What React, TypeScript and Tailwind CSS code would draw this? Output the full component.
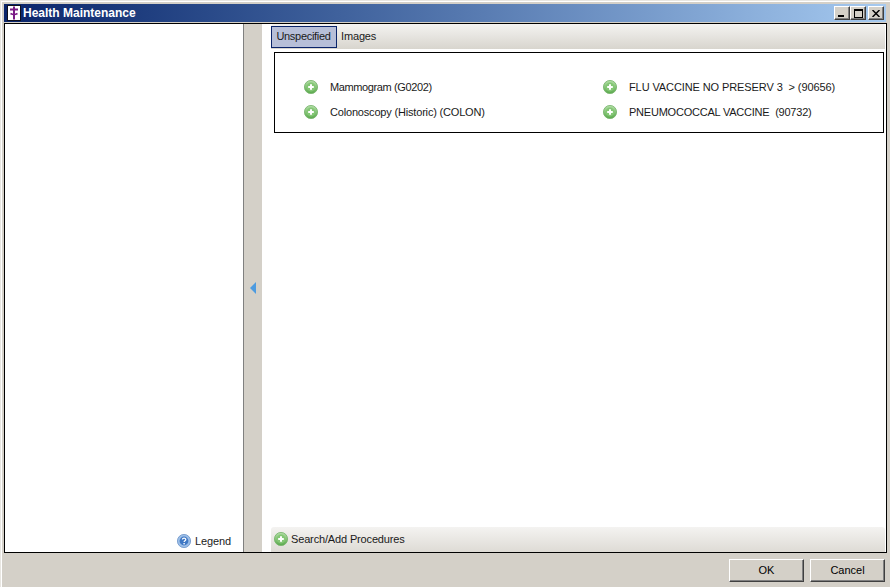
import React from 'react'

const font = { fontFamily: '"Liberation Sans", Arial, sans-serif' }

function PlusIcon({ id, className = '' }: { id: string; className?: string }) {
  return (
    <svg width="14" height="14" viewBox="0 0 14 14" className={`shrink-0 ${className}`}>
      <defs>
        <linearGradient id={id} x1="0" y1="0" x2="0" y2="1">
          <stop offset="0" stopColor="#b4dfa8" />
          <stop offset="1" stopColor="#5aa94c" />
        </linearGradient>
      </defs>
      <circle cx="7" cy="7" r="6.6" fill={`url(#${id})`} stroke="#74b268" strokeWidth="0.8" />
      <circle cx="7" cy="7" r="4.4" fill="#84c775" />
      <path d="M7 4.2v5.6M4.2 7h5.6" stroke="#fff" strokeWidth="2" />
    </svg>
  )
}

function HelpIcon() {
  return (
    <svg width="14" height="14" viewBox="0 0 14 14" className="shrink-0">
      <circle cx="7" cy="7" r="6.6" fill="#9dbfe8" stroke="#6b93c8" strokeWidth="0.8" />
      <circle cx="7" cy="7" r="4.4" fill="#3f78c4" />
      <path d="M5.4 5.6c0-2 3.4-2 3.4 0 0 1.2-1.7 1.2-1.7 2.4" fill="none" stroke="#fff" strokeWidth="1.2" />
      <rect x="6.4" y="9" width="1.4" height="1.4" fill="#fff" />
    </svg>
  )
}

function AppIcon() {
  return (
    <svg width="14" height="16" viewBox="0 0 14 16" className="shrink-0">
      <rect width="14" height="16" fill="#10101c" />
      <rect x="1" y="1" width="12" height="14" fill="#fff" />
      <path d="M7 1.5v13M3 4.5h8" stroke="#7a1b86" strokeWidth="2" />
      <path d="M3.5 8.5c2.4 1.4 4.6 1.4 7 0" stroke="#7a1b86" strokeWidth="1.6" fill="none" />
    </svg>
  )
}

function CaptionButton({ children, className = '' }: { children: React.ReactNode; className?: string }) {
  return (
    <div
      className={`flex h-[14px] w-[16px] items-center justify-center border border-t-white border-l-white border-r-[#404040] border-b-[#404040] bg-[#d4d0c8] shadow-[inset_-1px_-1px_0_#808080] ${className}`}
    >
      {children}
    </div>
  )
}

function ProcedureItem({ id, label, tracking }: { id: string; label: string; tracking: string }) {
  return (
    <div className="flex h-[25px] items-center">
      <PlusIcon id={id} className="mb-[2px]" />
      <span className={`ml-[12px] whitespace-pre text-[11px] text-[#1a1a1a] ${tracking}`}>{label}</span>
    </div>
  )
}

function DialogButton({ label }: { label: string }) {
  return (
    <button className="h-[23px] w-[75px] border border-t-white border-l-white border-r-[#404040] border-b-[#404040] bg-[#d4d0c8] text-[11px] text-black shadow-[inset_-1px_-1px_0_#808080]">
      {label}
    </button>
  )
}

export default function App() {
  return (
    <div
      style={font}
      className="flex h-[587px] w-[890px] flex-col overflow-hidden bg-[#d4d0c8] px-[4px] pt-[4px] text-[12px] shadow-[inset_1px_1px_0_#e8e6e1,inset_2px_2px_0_#ffffff]"
    >
      {/* barra de titulo */}
      <div className="flex h-[18px] shrink-0 items-center bg-gradient-to-r from-[#0a246a] to-[#a6caf0] pl-[3px] pr-[2px]">
        <AppIcon />
        <span className="ml-[2px] text-[12px] font-bold text-white">Health Maintenance</span>
        <div className="ml-auto flex items-center">
          <CaptionButton>
            <div className="mt-[6px] mr-[2px] h-[2px] w-[6px] bg-black" />
          </CaptionButton>
          <CaptionButton className="mr-[2px]">
            <div className="h-[9px] w-[9px] border border-t-2 border-black" />
          </CaptionButton>
          <CaptionButton>
            <svg width="8" height="7" viewBox="0 0 8 7">
              <path d="M0.5 0l7 7M7.5 0l-7 7" stroke="#000" strokeWidth="1.5" />
            </svg>
          </CaptionButton>
        </div>
      </div>

      {/* cuerpo */}
      <div className="mt-[1px] flex h-[530px] w-[883px] shrink-0 border border-black bg-white">
        <div className="flex w-[238px] shrink-0 flex-col justify-end pb-[3px] pr-[12px]">
          <div className="flex items-center justify-end">
            <HelpIcon />
            <span className="ml-[4px] text-[11px] tracking-[-0.1px] text-[#1a1a1a]">Legend</span>
          </div>
        </div>

        <div className="flex w-[19px] shrink-0 items-center justify-center border-l border-[#808080] bg-[#d4d0c8]">
          <svg width="8" height="12" viewBox="0 0 8 12">
            <path d="M7 0v12L1 6z" fill="#4d9be0" />
          </svg>
        </div>

        <div className="flex min-w-0 flex-1 flex-col pl-[9px] pr-[1px]">
          <div className="flex h-[25px] shrink-0 items-center rounded-t-[3px] bg-gradient-to-b from-[#f4f3f1] to-[#d8d5ce]">
            <div className="flex h-[22px] w-[66px] items-center justify-center border border-[#0a246a] bg-[#b7bfd8] pr-[1px] text-[11px] tracking-[-0.3px] text-[#1a1a1a]">
              Unspecified
            </div>
            <span className="ml-[4px] text-[11px] tracking-[-0.15px] text-[#1a1a1a]">Images</span>
          </div>

          <div className="mt-[3px] ml-[3px] h-[81px] w-[610px] shrink-0 border border-black">
            <div className="grid grid-cols-[299px_1fr] pt-[22px] pl-[29px]">
              <ProcedureItem id="p1" label="Mammogram (G0202)" tracking="tracking-[-0.38px]" />
              <ProcedureItem id="p2" label="FLU VACCINE NO PRESERV 3  > (90656)" tracking="tracking-[-0.1px]" />
              <ProcedureItem id="p3" label="Colonoscopy (Historic) (COLON)" tracking="tracking-[-0.18px]" />
              <ProcedureItem id="p4" label="PNEUMOCOCCAL VACCINE  (90732)" tracking="tracking-[-0.22px]" />
            </div>
          </div>

          <div className="mt-auto flex h-[25px] shrink-0 items-center rounded-t-[3px] bg-gradient-to-b from-[#f4f3f1] to-[#dedbd5] pl-[3px]">
            <PlusIcon id="p5" className="mb-[2px]" />
            <span className="ml-[3px] text-[11px] tracking-[-0.15px] text-[#1a1a1a]">Search/Add Procedures</span>
          </div>
        </div>
      </div>

      {/* botones */}
      <div className="flex flex-1 items-start justify-end gap-[6px] pt-[6px] pr-[1px]">
        <DialogButton label="OK" />
        <DialogButton label="Cancel" />
      </div>
    </div>
  )
}
